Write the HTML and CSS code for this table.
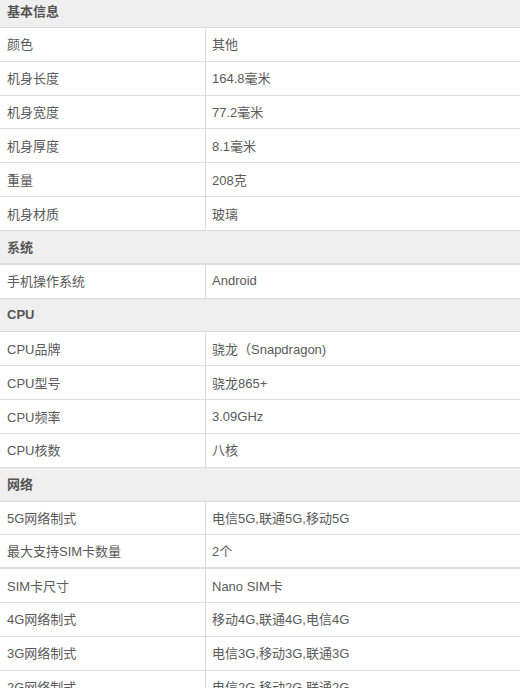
FILE: index.html
```html
<!DOCTYPE html>
<html lang="zh-CN">
<head>
<meta charset="utf-8">
<title>参数</title>
<link rel="stylesheet" href="styles.css">
</head>
<body>
<div class="specs">
  <div class="row head">基本信息</div>
  <div class="row"><div class="k">颜色</div><div class="v">其他</div></div>
  <div class="row"><div class="k">机身长度</div><div class="v">164.8毫米</div></div>
  <div class="row"><div class="k">机身宽度</div><div class="v">77.2毫米</div></div>
  <div class="row"><div class="k">机身厚度</div><div class="v">8.1毫米</div></div>
  <div class="row"><div class="k">重量</div><div class="v">208克</div></div>
  <div class="row"><div class="k">机身材质</div><div class="v">玻璃</div></div>
  <div class="row head thick">系统</div>
  <div class="row"><div class="k">手机操作系统</div><div class="v">Android</div></div>
  <div class="row head">CPU</div>
  <div class="row"><div class="k">CPU品牌</div><div class="v">骁龙（Snapdragon)</div></div>
  <div class="row"><div class="k">CPU型号</div><div class="v">骁龙865+</div></div>
  <div class="row"><div class="k">CPU频率</div><div class="v">3.09GHz</div></div>
  <div class="row"><div class="k">CPU核数</div><div class="v">八核</div></div>
  <div class="row head">网络</div>
  <div class="row"><div class="k">5G网络制式</div><div class="v">电信5G,联通5G,移动5G</div></div>
  <div class="row thick"><div class="k">最大支持SIM卡数量</div><div class="v">2个</div></div>
  <div class="row"><div class="k">SIM卡尺寸</div><div class="v">Nano SIM卡</div></div>
  <div class="row"><div class="k">4G网络制式</div><div class="v">移动4G,联通4G,电信4G</div></div>
  <div class="row"><div class="k">3G网络制式</div><div class="v">电信3G,移动3G,联通3G</div></div>
  <div class="row"><div class="k">2G网络制式</div><div class="v">电信2G,移动2G,联通2G</div></div>
</div>
</body>
</html>
```
FILE: styles.css
```css
html, body {
  margin: 0;
  padding: 0;
  background: #fff;
  overflow: hidden;
}
.specs {
  margin-top: -5.84px;
  font-family: "Liberation Sans", "Noto Sans CJK SC", sans-serif;
  font-size: 13px;
  color: #5a5a5a;
}
.row {
  display: grid;
  grid-template-columns: 206px 1fr;
  height: 32.84px;
  border-bottom: 1px solid #ddd;
  box-sizing: content-box;
}
.row.thick {
  height: 31.84px;
  border-bottom-width: 2px;
}
.row.head {
  display: flex;
  align-items: center;
  padding-left: 7px;
  padding-bottom: 1px;
  height: 31.84px;
  background: #efefef;
  font-weight: bold;
  color: #555;
}
.row.head.thick {
  height: 30.84px;
}
.k, .v {
  display: flex;
  align-items: center;
  white-space: nowrap;
  padding-bottom: 1px;
}
.k {
  padding-left: 7px;
  border-right: 1px solid #ddd;
}
.v {
  padding-left: 6px;
}
```
